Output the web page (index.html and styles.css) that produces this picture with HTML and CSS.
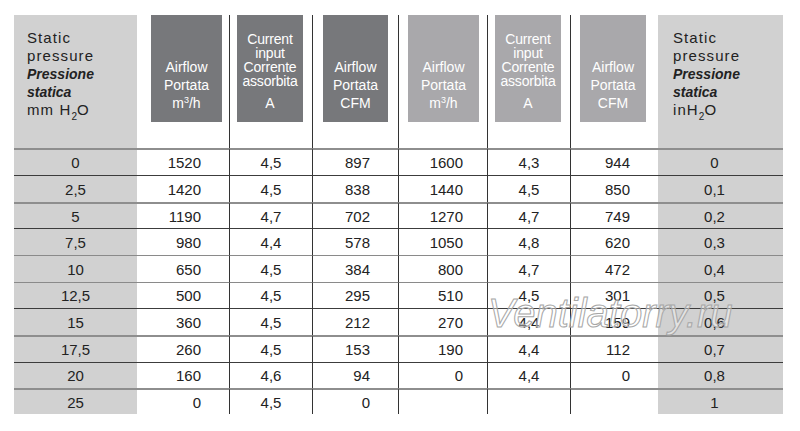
FILE: index.html
```html
<!DOCTYPE html>
<html>
<head>
<meta charset="utf-8">
<link rel="stylesheet" href="styles.css">
</head>
<body>
<div class="page">
  <div class="table">
    <div class="row head">
      <div class="c0 gray"><div class="label">
        <div class="sp">Static</div>
        <div class="sp">pressure</div>
        <div class="it">Pressione</div>
        <div class="it">statica</div>
        <div class="sp">mm H<sub>2</sub>O</div>
      </div></div>
      <div class="c1"><div class="box dark b1"><div class="af">Airflow<br>Portata<br>m<sup>3</sup>/h</div></div></div>
      <div class="c2"><div class="box dark b2"><div class="ci">Current<br>input<br>Corrente<br>assorbita</div><div class="unit">A</div></div></div>
      <div class="c3"><div class="box dark b3"><div class="af">Airflow<br>Portata<br>CFM</div></div></div>
      <div class="c4"><div class="box light b4"><div class="af">Airflow<br>Portata<br>m<sup>3</sup>/h</div></div></div>
      <div class="c5"><div class="box light b5"><div class="ci">Current<br>input<br>Corrente<br>assorbita</div><div class="unit">A</div></div></div>
      <div class="c6"><div class="box light b6"><div class="af">Airflow<br>Portata<br>CFM</div></div></div>
      <div class="c7 gray"><div class="label">
        <div class="sp">Static</div>
        <div class="sp">pressure</div>
        <div class="it">Pressione</div>
        <div class="it">statica</div>
        <div class="sp">inH<sub>2</sub>O</div>
      </div></div>
    </div>

    <div class="row g2 tall">
      <div class="c0 gray">0</div><div class="c1">1520</div><div class="c2">4,5</div><div class="c3">897</div><div class="c4">1600</div><div class="c5">4,3</div><div class="c6">944</div><div class="c7 gray">0</div>
    </div>
    <div class="row d1 tall">
      <div class="c0 gray">2,5</div><div class="c1">1420</div><div class="c2">4,5</div><div class="c3">838</div><div class="c4">1440</div><div class="c5">4,5</div><div class="c6">850</div><div class="c7 gray">0,1</div>
    </div>
    <div class="row g2 short">
      <div class="c0 gray">5</div><div class="c1">1190</div><div class="c2">4,7</div><div class="c3">702</div><div class="c4">1270</div><div class="c5">4,7</div><div class="c6">749</div><div class="c7 gray">0,2</div>
    </div>
    <div class="row d1 tall">
      <div class="c0 gray">7,5</div><div class="c1">980</div><div class="c2">4,4</div><div class="c3">578</div><div class="c4">1050</div><div class="c5">4,8</div><div class="c6">620</div><div class="c7 gray">0,3</div>
    </div>
    <div class="row g1 tall">
      <div class="c0 gray">10</div><div class="c1">650</div><div class="c2">4,5</div><div class="c3">384</div><div class="c4">800</div><div class="c5">4,7</div><div class="c6">472</div><div class="c7 gray">0,4</div>
    </div>
    <div class="row g1 short">
      <div class="c0 gray">12,5</div><div class="c1">500</div><div class="c2">4,5</div><div class="c3">295</div><div class="c4">510</div><div class="c5">4,5</div><div class="c6">301</div><div class="c7 gray">0,5</div>
    </div>
    <div class="row d1 tall">
      <div class="c0 gray">15</div><div class="c1">360</div><div class="c2">4,5</div><div class="c3">212</div><div class="c4">270</div><div class="c5">4,4</div><div class="c6">159</div><div class="c7 gray">0,6</div>
    </div>
    <div class="row g2 tall">
      <div class="c0 gray">17,5</div><div class="c1">260</div><div class="c2">4,5</div><div class="c3">153</div><div class="c4">190</div><div class="c5">4,4</div><div class="c6">112</div><div class="c7 gray">0,7</div>
    </div>
    <div class="row d1 short">
      <div class="c0 gray">20</div><div class="c1">160</div><div class="c2">4,6</div><div class="c3">94</div><div class="c4">0</div><div class="c5">4,4</div><div class="c6">0</div><div class="c7 gray">0,8</div>
    </div>
    <div class="row g2 short">
      <div class="c0 gray">25</div><div class="c1">0</div><div class="c2">4,5</div><div class="c3">0</div><div class="c4"></div><div class="c5"></div><div class="c6"></div><div class="c7 gray">1</div>
    </div>
  </div>
  <div class="watermark">Ventilatorry.ru</div>
</div>
</body>
</html>
```

FILE: styles.css
```css
html, body {
  margin: 0;
  padding: 0;
  background: #ffffff;
}

.page {
  position: relative;
  width: 800px;
  height: 431px;
  font-family: "Liberation Sans", Arial, sans-serif;
  color: #222222;
  overflow: hidden;
}

.table {
  display: grid;
  grid-template-columns: 123px 92px 83px 86px 89px 83px 88px 125px;
  margin: 15px 0 0 14px;
  width: 769px;
}

.row {
  display: contents;
}

.row > div {
  box-sizing: border-box;
  display: flex;
  align-items: center;
  font-size: 15px;
}

.row > .c2,
.row > .c3,
.row > .c4,
.row > .c5,
.row > .c6 {
  border-left: 1px solid #333333;
}

.gray {
  background: #d1d1d1;
}

/* row heights and line styles */
.tall > div { height: 27px; }
.short > div { height: 26px; }

.g2 > div { border-top: 2px solid #8e8e8e; }
.g1 > div { border-top: 1px solid #8a8a8a; }
.d1 > div { border-top: 1px solid #3c3c3c; }

/* data alignment */
.c0, .c2, .c5 { justify-content: center; }
.c1 { justify-content: flex-end; padding-right: 28px; }
.c3 { justify-content: flex-end; padding-right: 28px; }
.c4 { justify-content: flex-end; padding-right: 24px; }
.c6 { justify-content: flex-end; padding-right: 28px; }
.c7 { justify-content: center; padding-right: 12px; }

/* header */
.head > div {
  height: 133px;
  align-items: flex-start;
  justify-content: flex-start;
  padding: 0;
}

.label {
  padding: 14px 0 0 13px;
  line-height: 18px;
  color: #222222;
}

.head > .c7 .label {
  padding-left: 15px;
}

.label .sp {
  font-size: 15px;
  letter-spacing: 1.1px;
}

.label .it {
  font-size: 14px;
  font-weight: bold;
  font-style: italic;
  letter-spacing: 0;
}

.label sub {
  font-size: 10px;
  vertical-align: -5px;
  line-height: 0;
  letter-spacing: 0;
}

.box {
  height: 107px;
  box-sizing: border-box;
  display: flex;
  flex-direction: column;
  justify-content: flex-end;
  align-items: center;
  text-align: center;
  color: #ffffff;
  font-size: 14px;
  padding-bottom: 10px;
}

.dark { background: #77787b; }
.light { background: #a9a8ab; }

.b1 { width: 71px; margin-left: 14px; }
.b2 { width: 66px; margin-left: 7px; }
.b3 { width: 65px; margin-left: 10px; }
.b4 { width: 71px; margin-left: 9px; }
.b5 { width: 66px; margin-left: 7px; }
.b6 { width: 66px; margin-left: 9px; }

.af {
  line-height: 18px;
}

.ci {
  line-height: 14px;
  letter-spacing: -0.2px;
}

.unit {
  line-height: 18px;
  margin-top: 6px;
}

.box sup {
  font-size: 9px;
  vertical-align: 5px;
  line-height: 0;
}

.watermark {
  position: absolute;
  left: 488px;
  top: 293px;
  font-size: 40px;
  line-height: 1;
  font-style: italic;
  letter-spacing: 0;
  color: rgba(255, 255, 255, 0.4);
  -webkit-text-stroke: 1px #a6a6a6;
  pointer-events: none;
}
```
